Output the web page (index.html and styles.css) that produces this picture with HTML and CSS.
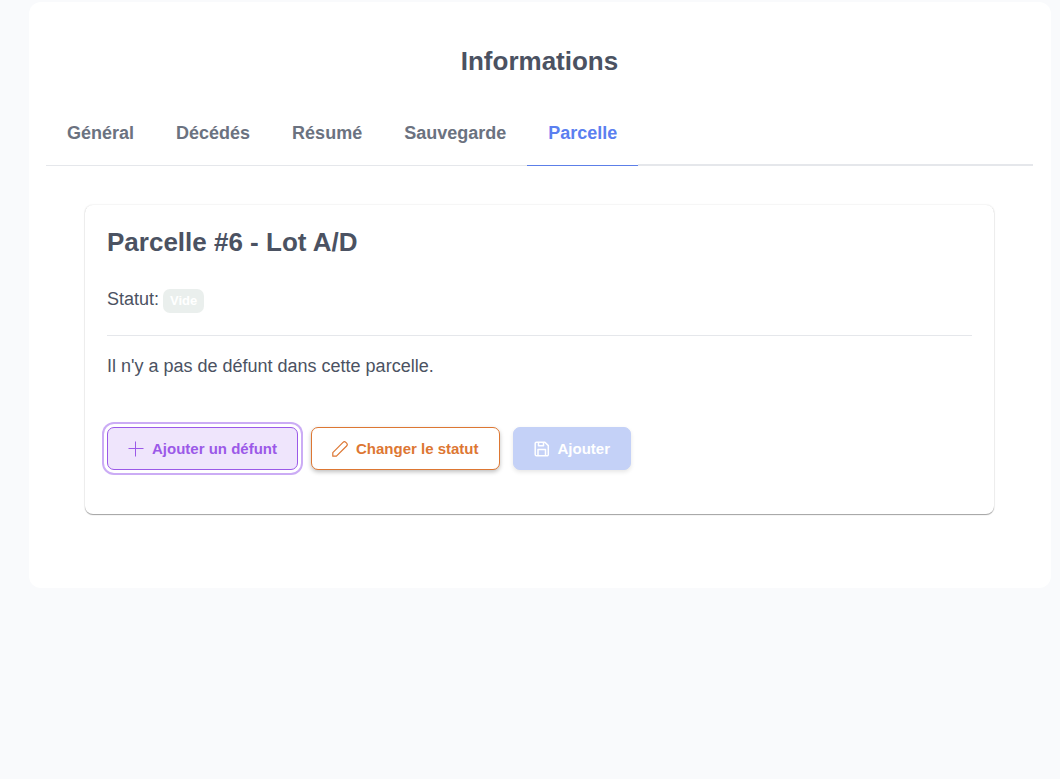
FILE: index.html
```html
<!DOCTYPE html>
<html lang="fr">
<head>
<meta charset="utf-8">
<meta name="viewport" content="width=device-width, initial-scale=1">
<title>Informations</title>
<link rel="stylesheet" href="styles.css">
</head>
<body>
<main class="panel">
  <h1 class="panel-title">Informations</h1>
  <div class="tabs" role="tablist">
    <button class="tab" type="button" role="tab" aria-selected="false">Général</button>
    <button class="tab" type="button" role="tab" aria-selected="false">Décédés</button>
    <button class="tab" type="button" role="tab" aria-selected="false">Résumé</button>
    <button class="tab" type="button" role="tab" aria-selected="false">Sauvegarde</button>
    <button class="tab tab-active" type="button" role="tab" aria-selected="true">Parcelle</button>
    <span class="tabs-rest"></span>
  </div>
  <section class="card">
    <h2 class="card-title">Parcelle #6 - Lot A/D</h2>
    <p class="status">Statut: <span class="badge">Vide</span></p>
    <hr class="divider">
    <p class="message">Il n'y a pas de défunt dans cette parcelle.</p>
    <div class="actions">
      <button class="btn btn-add" type="button">
        <svg class="icon" viewBox="0 0 16 16" aria-hidden="true"><path d="M7.5 .5v15M.5 7.5h15"/></svg>
        Ajouter un défunt
      </button>
      <button class="btn btn-edit" type="button">
        <svg class="icon icon-medium" viewBox="0 0 16 16" aria-hidden="true"><path d="M.8 15.2v-3.6L11 1.4a2 2 0 0 1 2.8 0l.8.8a2 2 0 0 1 0 2.8L4.4 15.2z"/></svg>
        Changer le statut
      </button>
      <button class="btn btn-save" type="button" disabled>
        <svg class="icon icon-bold" viewBox="0 0 16 16" aria-hidden="true"><path d="M2.5 1.2h8.4l3.4 3.4v8.9a1.3 1.3 0 0 1-1.3 1.3H2.5a1.3 1.3 0 0 1-1.3-1.3V2.5a1.3 1.3 0 0 1 1.3-1.3zM4.5 1.2v3.5h5V1.2M4 14.8V8.6h7.5v6.2"/></svg>
        Ajouter
      </button>
    </div>
  </section>
</main>
</body>
</html>
```
FILE: styles.css
```css
* { box-sizing: border-box; }

body {
  margin: 0;
  padding: 2px 9px 24px 29px;
  background: #f9fafc;
  color: #4b5262;
  font-family: "Liberation Sans", Arial, sans-serif;
  font-size: 18px;
  line-height: 26px;
}

h1, h2, p { margin: 0; }

.panel {
  padding: 40px 18px 74px 17px;
  border-radius: 12px;
  background: #fff;
}

.panel-title {
  font-size: 26px;
  line-height: 38px;
  text-align: center;
}

.tabs {
  display: flex;
  margin-top: 20px;
}

.tab {
  padding: 20px 21px 19px;
  border: 0;
  border-bottom: 1px solid #e5e7eb;
  background: none;
  color: #6b7280;
  font: bold 18px/26px "Liberation Sans", Arial, sans-serif;
}

.tab-active {
  border-color: #5c7fe8;
  color: #5b7ff0;
}

.tabs-rest {
  flex: 1;
  border-bottom: 2px solid #e5e7eb;
}

.card {
  margin: 39px 39px 0;
  padding: 18px 22px 44px;
  border-radius: 8px;
  background: #fff;
  box-shadow: 0 1px 1px rgba(0, 0, 0, 0.35), 0 0 2px rgba(0, 0, 0, 0.14);
}

.card-title {
  font-size: 26px;
  line-height: 38px;
}

.status {
  display: flex;
  align-items: center;
  gap: 4px;
  margin-top: 24px;
}

.badge {
  margin-top: 4px;
  padding: 0 7px;
  border-radius: 7px;
  background: #eaefed;
  color: #fff;
  font-size: 13px;
  font-weight: bold;
  line-height: 24px;
}

.divider {
  height: 1px;
  margin: 22px 0 17px;
  border: 0;
  background: #e5e7eb;
}

.actions {
  display: flex;
  gap: 13px;
  margin-top: 48px;
}

.btn {
  display: flex;
  align-items: center;
  gap: 8px;
  padding: 0 20px;
  border: 1px solid;
  border-radius: 7px;
  font: bold 15px/41px "Liberation Sans", Arial, sans-serif;
  box-shadow: 0 2px 4px rgba(0, 0, 0, 0.25);
}

.btn-add {
  border-color: #9b59e8;
  background: #efe5fc;
  color: #9b59e8;
  box-shadow: 0 0 0 3px #fff, 0 0 0 5px #cbacf5;
}

.btn-edit {
  border-color: #dd7733;
  background: #fff;
  color: #dd7733;
}

.btn-save {
  border-color: #c4d1f7;
  background: #c4d1f7;
  color: #fff;
  box-shadow: 0 2px 4px rgba(0, 0, 0, 0.1);
}

.icon {
  width: 16px;
  height: 16px;
  fill: none;
  stroke: currentColor;
  stroke-width: 1;
  stroke-linejoin: round;
}

.icon-medium { stroke-width: 1.2; }

.icon-bold { stroke-width: 1.5; }
```
